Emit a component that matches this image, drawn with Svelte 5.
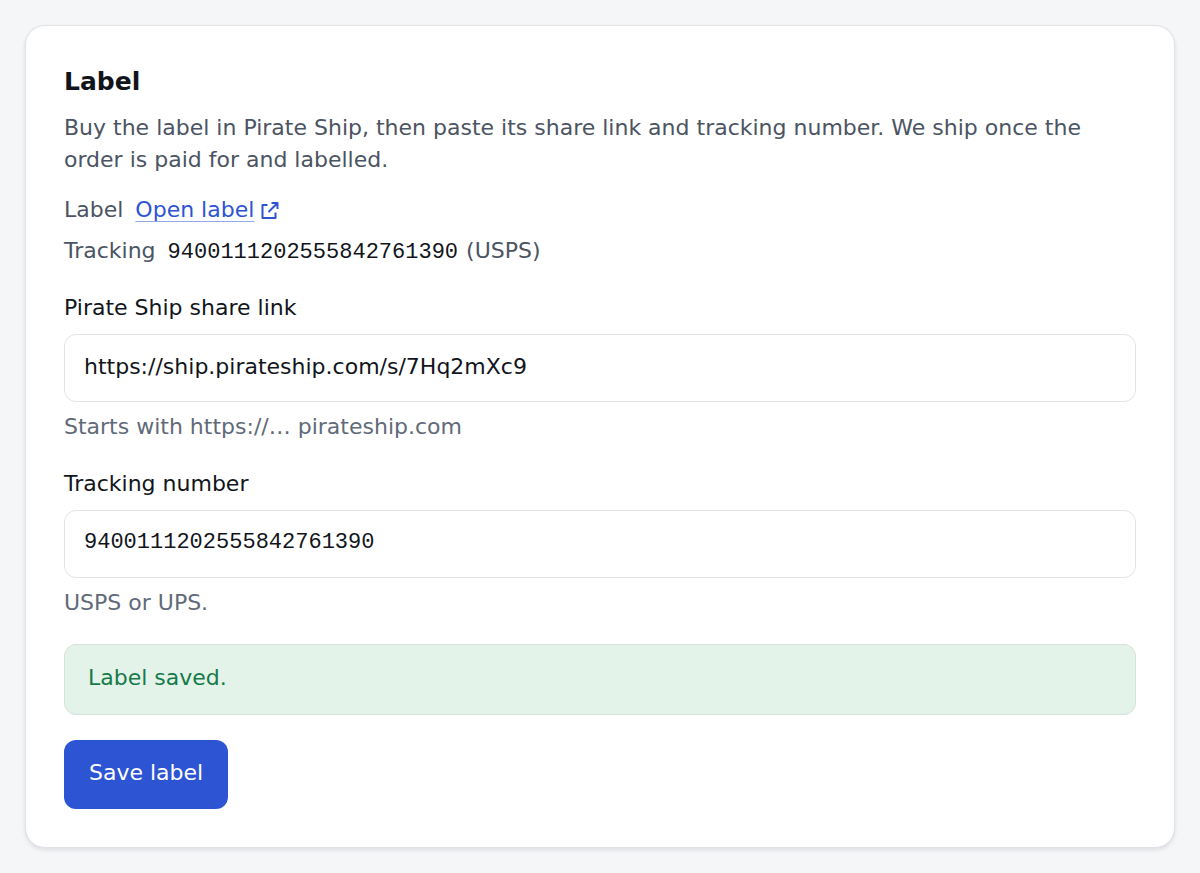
<script lang="ts">
	let label = $state({
		url: 'https://ship.pirateship.com/s/7Hq2mXc9',
		tracking: '9400111202555842761390',
		carrier: 'USPS',
	});

	let shareLink = $state('https://ship.pirateship.com/s/7Hq2mXc9');
	let trackingNumber = $state('9400111202555842761390');
	let saved = $state(true);

	function save(e: SubmitEvent) {
		e.preventDefault();
		label.url = shareLink;
		label.tracking = trackingNumber;
		label.carrier = trackingNumber.startsWith('1Z') ? 'UPS' : 'USPS';
		saved = true;
	}
</script>

<section class="card" aria-labelledby="label-title">
	<h2 id="label-title">Label</h2>
	<p class="intro">
		Buy the label in Pirate Ship, then paste its share link and tracking number. We ship once the
		order is paid for and labelled.
	</p>

	<dl class="facts">
		<div class="fact">
			<dt>Label</dt>
			<dd>
				<a href={label.url} target="_blank" rel="noreferrer">
					<span class="link-text">Open label</span>
					<svg class="icon" viewBox="0 0 18 18" aria-hidden="true">
						<path d="M6.5 4H1.5V17H14.5V11.5M10.5 2H16.5V8M16.5 2L7.5 11" />
					</svg>
				</a>
			</dd>
		</div>
		<div class="fact">
			<dt>Tracking</dt>
			<dd><span class="mono">{label.tracking}</span> <span>({label.carrier})</span></dd>
		</div>
	</dl>

	<form onsubmit={save}>
		<div class="field">
			<label for="share-link">Pirate Ship share link</label>
			<input
				id="share-link"
				type="text"
				bind:value={shareLink}
				oninput={() => saved = false}
				aria-describedby="share-link-hint"
			/>
			<p class="hint" id="share-link-hint">Starts with https://… pirateship.com</p>
		</div>
		<div class="field">
			<label for="tracking-number">Tracking number</label>
			<input
				id="tracking-number"
				class="mono"
				type="text"
				bind:value={trackingNumber}
				oninput={() => saved = false}
				aria-describedby="tracking-number-hint"
			/>
			<p class="hint" id="tracking-number-hint">USPS or UPS.</p>
		</div>
		{#if saved}
			<p class="notice" role="status">Label saved.</p>
		{/if}
		<button type="submit">Save label</button>
	</form>
</section>

<style>
	:global(body) {
		background: #f5f6f8;
	}
	.card {
		--text: #11151b;
		--text-secondary: #4b5462;
		--text-muted: #616a78;
		--border: #e0e2e5;
		--accent: #2d54d3;
		margin: 25px;
		padding: 38px;
		background: #fff;
		border: 1px solid var(--border);
		border-radius: 20px;
		box-shadow: 0 2px 4px rgba(16, 24, 40, 0.1);
		font-family: "DejaVu Sans", sans-serif;
		font-size: 22px;
		line-height: 32px;
		color: var(--text);
	}
	h2 {
		margin: 0 0 12px;
		font-size: 25px;
		line-height: 36px;
		font-weight: 700;
	}
	.intro {
		margin: 0 0 18px;
		color: var(--text-secondary);
	}
	.facts {
		display: flex;
		flex-direction: column;
		gap: 9px;
		margin: 0 0 23px;
		color: var(--text-secondary);
	}
	.fact {
		display: flex;
		align-items: baseline;
		gap: 12px;
	}
	dd {
		margin: 0;
		display: flex;
		align-items: baseline;
		gap: 8px;
	}
	a {
		display: flex;
		align-items: center;
		gap: 7px;
		color: var(--accent);
		text-decoration: none;
	}
	.link-text {
		text-decoration: underline;
		text-decoration-color: #94a7e8;
		text-decoration-thickness: 1px;
		text-decoration-skip-ink: none;
		text-underline-offset: 4px;
	}
	.icon {
		width: 18px;
		height: 18px;
		fill: none;
		stroke: currentColor;
		stroke-width: 2;
		stroke-linejoin: round;
	}
	.mono {
		font-family: "Liberation Mono", monospace;
		color: var(--text);
	}
	form {
		display: flex;
		flex-direction: column;
		gap: 25px;
	}
	.field {
		display: flex;
		flex-direction: column;
	}
	label {
		margin-bottom: 10px;
	}
	input {
		box-sizing: border-box;
		width: 100%;
		height: 68px;
		padding: 0 19px 3px;
		border: 1px solid var(--border);
		border-radius: 12px;
		background: #fff;
		color: var(--text);
		font-size: 22px;
	}
	input:not(.mono) {
		font-family: inherit;
	}
	.hint {
		margin: 9px 0 0;
		color: var(--text-muted);
	}
	.notice {
		margin: 0;
		padding: 17px 23px 20px;
		border: 1px solid #d7e1dc;
		border-radius: 12px;
		background: #e4f3ea;
		color: #157a48;
	}
	button {
		align-self: flex-start;
		padding: 17px 25px 20px;
		border: 0;
		border-radius: 12px;
		background: var(--accent);
		color: #fff;
		font: inherit;
		cursor: pointer;
	}
</style>
